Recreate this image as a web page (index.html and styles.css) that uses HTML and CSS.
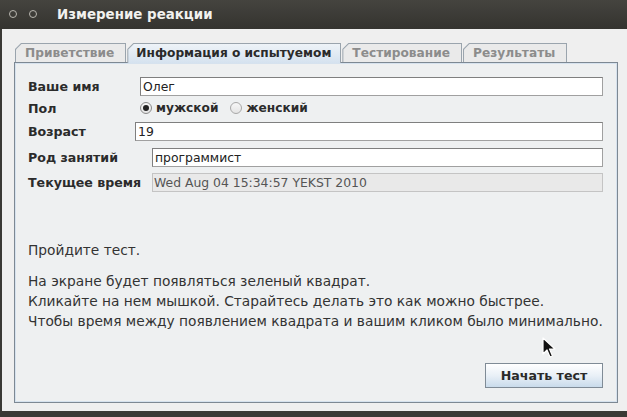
FILE: index.html
```html
<!DOCTYPE html>
<html lang="ru">
<head>
<meta charset="utf-8">
<title>Измерение реакции</title>
<link rel="stylesheet" href="styles.css">
</head>
<body>
<div class="screen">
  <header class="titlebar">
    <span class="dot"></span>
    <span class="dot"></span>
    <span class="title">Измерение реакции</span>
  </header>
  <div class="window">
    <nav class="tabs">
      <div class="tab"><div class="tab-in">Приветствие</div></div>
      <div class="tab tab-active"><div class="tab-in">Информация о испытуемом</div></div>
      <div class="tab"><div class="tab-in">Тестирование</div></div>
      <div class="tab"><div class="tab-in">Результаты</div></div>
    </nav>
    <section class="panel">
      <div class="row r1">
        <span class="label l-name">Ваше имя</span>
        <div class="field">Олег</div>
      </div>
      <div class="row r2">
        <span class="label l-sex">Пол</span>
        <span class="radio radio-on"></span><span class="opt">мужской</span>
        <span class="radio radio-off"></span><span class="opt">женский</span>
      </div>
      <div class="row r3">
        <span class="label l-age">Возраст</span>
        <div class="field">19</div>
      </div>
      <div class="row r4">
        <span class="label l-job">Род занятий</span>
        <div class="field">программист</div>
      </div>
      <div class="row r5">
        <span class="label l-job">Текущее время</span>
        <div class="field field-off">Wed Aug 04 15:34:57 YEKST 2010</div>
      </div>
      <div class="intro">
        <p class="p1">Пройдите тест.</p>
        <p class="p2">На экране будет появляться зеленый квадрат.<br>Кликайте на нем мышкой. Старайтесь делать это как можно быстрее.<br>Чтобы время между появлением квадрата и вашим кликом было минимально.</p>
      </div>
      <div class="actions">
        <button class="btn">Начать тест</button>
      </div>
    </section>
  </div>
  <svg class="cursor" width="14" height="22" viewBox="0 0 14 22">
    <path d="M1 1 L1 17 L5 13 L8 20 L10.5 19 L7.5 12 L13 12 Z" fill="#111" stroke="#fff" stroke-width="1.2" stroke-linejoin="round"/>
  </svg>
</div>
</body>
</html>
```

FILE: styles.css
```css
* { box-sizing: border-box; }
html, body { margin: 0; padding: 0; }
body {
  width: 627px;
  height: 417px;
  overflow: hidden;
  background: #3a3935;
  font-family: "DejaVu Sans", "Liberation Sans", sans-serif;
}
.screen {
  position: relative;
  width: 627px;
  height: 417px;
  display: flex;
  flex-direction: column;
}
.titlebar {
  height: 29px;
  flex: none;
  display: flex;
  align-items: center;
  background: linear-gradient(#45443f, #34332f);
  padding-left: 9px;
}
.dot {
  width: 8px;
  height: 8px;
  border-radius: 50%;
  border: 1.5px solid #b9b7b0;
  margin-right: 12px;
  margin-top: -1px;
}
.title {
  margin-left: 8px;
  color: #f2f1ee;
  font-weight: bold;
  font-size: 13.4px;
}
.window {
  height: 382px;
  flex: none;
  margin-left: 2px;
  background: #efefef;
  padding: 14px 0 0 12px;
  display: flex;
  flex-direction: column;
}
.tabs {
  display: flex;
  height: 19px;
  padding-left: 1px;
  flex: none;
}
.tab {
  background: #9aa4ad;
  clip-path: polygon(6px 0, 100% 0, 100% 100%, 0 100%, 0 6px);
  padding: 1px 1px 0 1px;
  margin-right: 1px;
}
.tab-in {
  height: 18px;
  clip-path: polygon(5.5px 0, 100% 0, 100% 100%, 0 100%, 0 5.5px);
  background: #eaeaea;
  color: #8c8c8c;
  font-weight: bold;
  font-size: 12.2px;
  line-height: 18px;
  padding: 0 11px 0 9px;
}
.tab-active {
  height: 20px;
  margin-bottom: -1px;
  position: relative;
}
.tab-active .tab-in {
  height: 19px;
  background: linear-gradient(#eef3f8, #d5e2ef);
  color: #2a2a2a;
  padding: 0 9px 0 8px;
}
.panel {
  width: 604px;
  height: 341px;
  border: 1px solid #7d8893;
  box-shadow: inset 1px 1px 0 #d6e2ee, inset -1px -1px 0 #d6e2ee;
  background: #eef0f1;
  padding: 14px 14px 14px 13px;
  display: flex;
  flex-direction: column;
}
.row {
  display: flex;
  align-items: center;
  height: 19px;
  flex: none;
}
.r2 { height: 22px; margin-top: 1px; }
.r3 { margin-top: 3px; }
.r4 { margin-top: 7px; }
.r5 { margin-top: 6px; }
.label {
  flex: none;
  font-weight: bold;
  font-size: 12.6px;
  color: #2b2b2b;
}
.l-name { width: 112px; }
.l-sex { width: 112px; }
.l-age { width: 107px; }
.l-job { width: 124px; }
.field {
  flex: 1;
  height: 19px;
  border: 1px solid #7f7f7f;
  border-right-color: #a0a0a0;
  border-bottom-color: #a0a0a0;
  background: #fff;
  font-size: 12.4px;
  line-height: 17px;
  padding-left: 2px;
  color: #222;
}
.field-off {
  background: #e9e9e9;
  border-color: #c4c4c4;
  color: #555;
  padding-left: 1px;
}
.radio {
  flex: none;
  width: 12px;
  height: 12px;
  border-radius: 50%;
  border: 1px solid #8a8a8a;
  background: linear-gradient(#f7f7f7, #e4e4e4);
  margin-right: 4px;
  position: relative;
}
.radio-on::after {
  content: "";
  position: absolute;
  left: 2px;
  top: 2px;
  width: 6px;
  height: 6px;
  border-radius: 50%;
  background: #222;
}
.radio-off { border-color: #a8a8a8; margin-left: 12px; }
.opt {
  font-weight: bold;
  font-size: 12.2px;
  color: #2b2b2b;
}
.intro {
  margin-top: 48px;
  color: #333;
  font-size: 13.75px;
  line-height: 20px;
  white-space: nowrap;
  flex: none;
}
.intro p { margin: 0; }
.p2 { margin-top: 11px !important; }
.actions {
  margin-top: auto;
  display: flex;
  justify-content: flex-end;
  flex: none;
}
.btn {
  width: 118px;
  height: 25px;
  border: 1px solid #7f8b96;
  background: linear-gradient(#ffffff, #e9f0f7 50%, #c9dbeb);
  font-family: "DejaVu Sans", "Liberation Sans", sans-serif;
  font-weight: bold;
  font-size: 12.6px;
  color: #2a2a2a;
  padding: 0;
}
.cursor {
  position: absolute;
  left: 542px;
  top: 337px;
}
```
